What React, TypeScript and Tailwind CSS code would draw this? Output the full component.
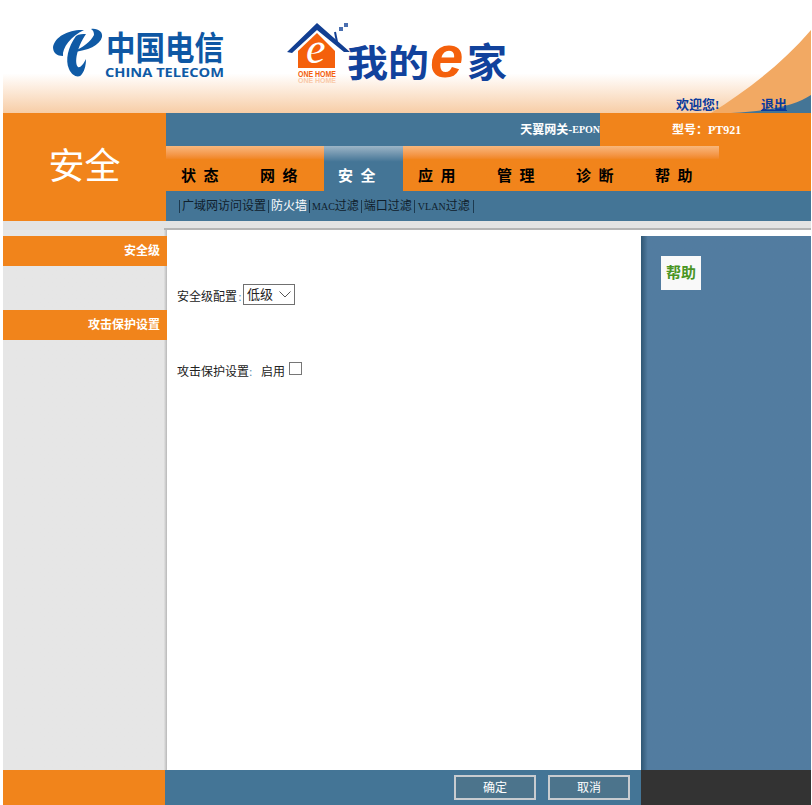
const SERIF = "font-['Liberation_Serif','Noto_Sans_CJK_SC',serif]";

const TABS = ['状 态', '网 络', '安 全', '应 用', '管 理', '诊 断', '帮 助'];

function TelecomLogo() {
  return (
    <svg width="176" height="52" viewBox="0 0 176 52" className="shrink-0 overflow-visible">
      {/* left crescent */}
      <path d="M31 3C17 2 2 9 0 20C0 26 4 29 10 29C9 21 18 9 31 3Z" fill="#0f5aa5" />
      {/* right crescent and bar */}
      <path d="M38 2C45 1 50 5 49 10C47 18 35 24 19 25C30 21 38 14 41 8C41 5 40 3 38 2Z" fill="#0f5aa5" />
      {/* stem with hook */}
      <path d="M23 9C15 20 12 33 16 42C19 49 26 52 29 47C32 43 33 37 33 32C30 38 27 41 25 40C21 36 24 20 33 7C30 7 26 7 23 9Z" fill="#0f5aa5" />
      <text x="53" y="33" fontSize="33" fontWeight="700" fill="#0e57a4" textLength="118" lengthAdjust="spacingAndGlyphs" fontFamily="'Noto Sans CJK SC',sans-serif">中国电信</text>
      <text x="52" y="50" fontSize="12.500" fontWeight="700" fill="#0f5aa5" textLength="119" lengthAdjust="spacingAndGlyphs" fontFamily="'Open Sans',sans-serif">CHINA TELECOM</text>
    </svg>
  );
}

function HomeLogo() {
  return (
    <svg width="222" height="74" viewBox="0 0 222 74" className="shrink-0 overflow-visible">
      <path d="M11 29L30 11L48 29V46H11Z" fill="#f4600c" />
      <path d="M0 30L30 1L63 30H57L30 8L5 31Z" fill="#123f92" />
      <path d="M48 10L50 20" stroke="#123f92" strokeWidth="2" fill="none" />
      <rect x="52" y="5" width="4" height="4" fill="#4a6fb0" />
      <rect x="57" y="1" width="4" height="4" fill="#4a6fb0" />
      <text x="19" y="41" fontSize="44" fontStyle="italic" fill="#fff" fontFamily="'Liberation Serif',serif">e</text>
      <text x="11" y="55" fontSize="9" fontWeight="700" fill="#f4600c" textLength="38" lengthAdjust="spacingAndGlyphs" fontFamily="'Liberation Sans',sans-serif">ONE HOME</text>
      <text x="11" y="61" fontSize="7" fontWeight="700" fill="#f9c9a8" textLength="38" lengthAdjust="spacingAndGlyphs" fontFamily="'Liberation Sans',sans-serif">ONE HOME</text>
      <text x="60" y="55" fontSize="37" fontWeight="700" fill="#11429c" textLength="82" lengthAdjust="spacingAndGlyphs" fontFamily="'Noto Sans CJK SC',sans-serif">我的</text>
      <text x="143" y="55" fontSize="60" fontStyle="italic" fontWeight="700" fill="#f4600c" fontFamily="'Liberation Sans',sans-serif">e</text>
      <text x="180" y="55" fontSize="40" fontWeight="700" fill="#11429c" fontFamily="'Noto Sans CJK SC',sans-serif">家</text>
    </svg>
  );
}

function Sep() {
  return <span className="h-[13px] w-px bg-[#1d3a50]" />;
}

export default function App() {
  return (
    <div className={`h-[805px] w-[812px] overflow-hidden bg-white pl-[3px] pr-px ${SERIF}`}>
      {/* banner */}
      <div className="relative flex h-[113px] bg-gradient-to-b from-white from-[65%] to-[#f7cda6] pl-[50px] pt-[27px]">
        <svg width="180" height="90" viewBox="0 0 180 90" className="absolute bottom-0 right-0">
          <path d="M80 90C115 68 150 42 180 7V90Z" fill="#f2a963" />
          <path d="M100 90C140 88 165 82 180 72V90Z" fill="#447596" />
        </svg>
        <div className="relative">
          <TelecomLogo />
        </div>
        <div className="relative ml-[58px] -mt-[5px]">
          <HomeLogo />
        </div>
        <span className="absolute bottom-0 left-[673px] text-[13px] font-bold leading-[16px] text-[#0a3a9c]">欢迎您!</span>
        <span className="absolute bottom-0 left-[758px] text-[13px] font-bold leading-[16px] text-[#0a3a9c] underline">退出</span>
      </div>

      {/* top section */}
      <div className="flex h-[108px]">
        <div className="flex w-[163px] items-center justify-center bg-[#f1841b] text-[36px] leading-none text-white">安全</div>
        <div className="flex flex-1 flex-col">
          <div className="flex h-[33px] text-[12px] font-bold text-white">
            <div className="flex w-[434px] items-center justify-end bg-[#447596]">
              天翼网关-<span className="text-[10px]">EPON</span>
            </div>
            <div className="flex flex-1 items-center bg-[#f1841b] pl-[72px]">型号：PT921</div>
          </div>
          <div className="flex h-[45px] bg-[#f1841b]">
            {TABS.map(t => (
              <div
                key={t}
                className={
                  t === '安 全'
                    ? 'flex w-[79px] items-end bg-gradient-to-b from-[#9db5c6] to-[#447596] to-[35%] pb-[5px] pl-[14px] text-[15px] font-bold leading-[20px] whitespace-pre text-white'
                    : 'flex w-[79px] items-end bg-gradient-to-b from-[#f8b77c] to-[#f1841b] to-[30%] pb-[5px] pl-[15px] text-[15px] font-bold leading-[20px] whitespace-pre text-black'
                }
              >
                {t.replace(' ', '  ')}
              </div>
            ))}
          </div>
          <div className="flex h-[30px] items-center bg-[#447596] pl-[13px] text-[12px] leading-none text-[#10202c]">
            <Sep />
            <span className="px-[2px]">广域网访问设置</span>
            <Sep />
            <span className="px-[2px] text-white">防火墙</span>
            <Sep />
            <span className="px-[2px]"><span className="text-[10px]">MAC</span>过滤</span>
            <Sep />
            <span className="px-[2px]">端口过滤</span>
            <Sep />
            <span className="px-[3px]"><span className="text-[10px]">VLAN</span>过滤</span>
            <Sep />
          </div>
        </div>
      </div>

      {/* body */}
      <div className="flex h-[549px] flex-col">
        <div className="flex h-[9px] bg-[#e3e3e3]">
          <div className="w-[161px]" />
          <div className="flex-1 border-b-2 border-[#b5b5b5]" />
        </div>
        <div className="flex flex-1">
          <div className="w-[164px] bg-gradient-to-r from-[#e6e6e6] from-[98%] to-[#b8b8b8] pt-[6px] text-[12px] font-bold text-white">
            <div className="flex h-[30px] items-center justify-end bg-[#f1841b] pr-[7px]">安全级</div>
            <div className="mt-[44px] flex h-[30px] items-center justify-end bg-[#f1841b] pr-[7px]">攻击保护设置</div>
          </div>
          <div className="flex-1 bg-white pl-[10px] text-[12px] text-[#222]">
            <div className="mt-[54px] flex h-[21px] items-center">
              <span className="mt-[4px]">安全级配置</span>
              <span className="mt-[4px] w-[6px] text-center text-[#5b8fb0]">:</span>
              <div className="flex h-[21px] w-[52px] items-center justify-between border border-[#707070] px-[3px] text-[13px] text-[#222]">
                低级
                <svg width="12" height="7" viewBox="0 0 12 7" fill="none" stroke="#555" strokeWidth="1">
                  <path d="M0.500 0.500L6 6L11.500 0.500" />
                </svg>
              </div>
            </div>
            <div className="mt-[55px] flex h-[22px] items-center">
              <span className="mt-[2px]">攻击保护设置</span>
              <span className="mt-[2px] w-[12px] text-[#5b8fb0]">:</span>
              <span className="mt-[2px]">启用</span>
              <span className="mb-[5px] ml-[4px] h-[13px] w-[13px] border border-[#767676] bg-white" />
            </div>
          </div>
          <div className="flex w-[170px] flex-col">
            <div className="h-[6px] bg-white" />
            <div className="flex-1 bg-gradient-to-r from-[#2f5673] to-[#527ca0] to-[4%] pl-[20px] pt-[20px]">
              <div className="flex h-[34px] w-[40px] items-center justify-center bg-[#f9f9f9] text-[15px] font-bold text-[#4a9524]">帮助</div>
            </div>
          </div>
        </div>
      </div>

      {/* footer */}
      <div className="flex h-[35px]">
        <div className="w-[162px] bg-[#f1841b]" />
        <div className="flex w-[476px] items-center justify-end gap-[12px] bg-[#447596] pr-[11px]">
          <button className="h-[25px] w-[82px] border-2 border-[#c8ccd0] bg-[#4c748c] text-[12px] text-white">确定</button>
          <button className="h-[25px] w-[82px] border-2 border-[#c8ccd0] bg-[#4c748c] text-[12px] text-white">取消</button>
        </div>
        <div className="flex-1 bg-[#333333]" />
      </div>
    </div>
  );
}
